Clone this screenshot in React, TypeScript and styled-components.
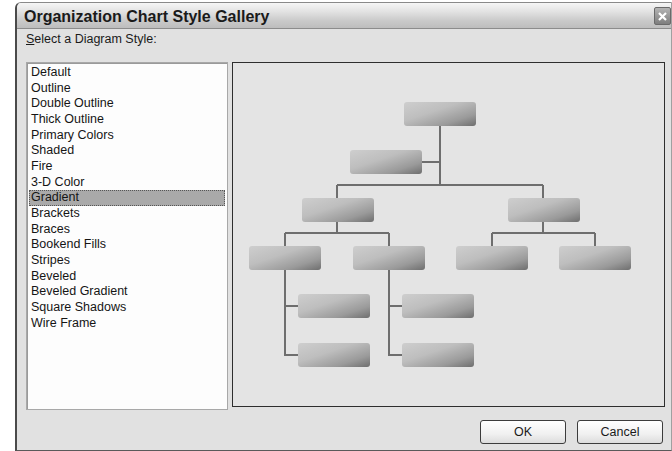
import * as React from 'react'
import styled, { createGlobalStyle } from 'styled-components'

const styles = [
  'Default',
  'Outline',
  'Double Outline',
  'Thick Outline',
  'Primary Colors',
  'Shaded',
  'Fire',
  '3-D Color',
  'Gradient',
  'Brackets',
  'Braces',
  'Bookend Fills',
  'Stripes',
  'Beveled',
  'Beveled Gradient',
  'Square Shadows',
  'Wire Frame',
]

// chart boxes, in preview coordinates
const boxes: [number, number][] = [
  [171, 39],
  [117, 87],
  [69, 135],
  [275, 135],
  [16, 183],
  [120, 183],
  [223, 183],
  [326, 183],
  [65, 231],
  [169, 231],
  [65, 280],
  [169, 280],
]

const lines = [
  'M207 63 V122',
  'M189 99 H207',
  'M104 122 H310',
  'M104 122 V135',
  'M310 122 V135',
  'M104 159 V170',
  'M52 170 H156',
  'M52 170 V183',
  'M156 170 V183',
  'M310 159 V170',
  'M259 170 H362',
  'M259 170 V183',
  'M362 170 V183',
  'M52 207 V292 H65',
  'M52 243 H65',
  'M156 207 V292 H169',
  'M156 243 H169',
]

const OrgChart: React.FC = () => (
  <svg width='431' height='343' viewBox='0 0 431 343'>
    <defs>
      <linearGradient id='boxFill' x1='0' y1='0' x2='1' y2='1'>
        <stop offset='0' stopColor='#cecece' />
        <stop offset='0.4' stopColor='#bebebe' />
        <stop offset='0.75' stopColor='#9a9a9a' />
        <stop offset='1' stopColor='#6e6e6e' />
      </linearGradient>
    </defs>
    <g stroke='#6e6e6e' strokeWidth='2' fill='none'>
      {lines.map((d) => (
        <path key={d} d={d} />
      ))}
    </g>
    {boxes.map(([x, y]) => (
      <rect key={`${x}-${y}`} x={x} y={y} width='72' height='24' rx='3' fill='url(#boxFill)' />
    ))}
  </svg>
)

const App: React.FC = () => {
  const [selected, setSelected] = React.useState('Gradient')

  return (
    <>
      <GlobalStyle />
      <Window>
        <TitleBar>
          <Title>Organization Chart Style Gallery</Title>
          <CloseButton aria-label='Close'>
            <svg width='9' height='9' viewBox='0 0 9 9'>
              <path d='M1 1 L8 8 M8 1 L1 8' stroke='#fff' strokeWidth='2.2' />
            </svg>
          </CloseButton>
        </TitleBar>
        <Body>
          <Label>
            <u>S</u>elect a Diagram Style:
          </Label>
          <Content>
            <StyleList>
              {styles.map((s) => (
                <StyleItem key={s} $active={s === selected} onClick={() => setSelected(s)}>
                  {s}
                </StyleItem>
              ))}
            </StyleList>
            <Preview>
              <OrgChart />
            </Preview>
          </Content>
          <Footer>
            <DialogButton>OK</DialogButton>
            <DialogButton>Cancel</DialogButton>
          </Footer>
        </Body>
      </Window>
    </>
  )
}

export default App

const GlobalStyle = createGlobalStyle`
  body {
    margin: 0;
    background: #fff;
    font-family: 'Liberation Sans', Arial, sans-serif;
  }
`

const Window = styled.div`
  margin: 2px 0 0 15px;
  width: 657px;
  height: 449px;
  box-sizing: border-box;
  border-left: 2px solid #4a4a4a;
  border-top: 1px solid #8a8a8a;
  border-bottom: 1px solid #5a5a5a;
  border-right: 1px solid #a0a0a0;
  border-top-left-radius: 6px;
  background: #e1e1e1;
  display: flex;
  flex-direction: column;
  overflow: hidden;
`

const TitleBar = styled.div`
  height: 25px;
  flex: none;
  display: flex;
  align-items: center;
  justify-content: space-between;
  padding: 0 0 0 7px;
  background: linear-gradient(#f6f6f6 0%, #e2e2e2 35%, #cacaca 70%, #bdbdbd 100%);
  border-bottom: 1px solid #8c8c8c;
`

const Title = styled.div`
  font-weight: bold;
  font-size: 16px;
  color: #1a1a1a;
  padding-top: 2px;
`

const CloseButton = styled.div`
  width: 15px;
  height: 16px;
  margin-top: 1px;
  border-radius: 2px;
  background: linear-gradient(#b4b4b4, #7e7e7e);
  border: 1px solid #6a6a6a;
  display: flex;
  align-items: center;
  justify-content: center;
`

const Body = styled.div`
  flex: 1;
  display: flex;
  flex-direction: column;
  padding: 0 0 0 9px;
`

const Label = styled.div`
  font-size: 12.5px;
  color: #1a1a1a;
  height: 21px;
  line-height: 21px;

  u {
    text-decoration-thickness: 1px;
  }
`

const Content = styled.div`
  display: flex;
  gap: 4px;
  align-items: flex-start;
  margin-top: 12px;
`

const StyleList = styled.div`
  width: 202px;
  height: 348px;
  box-sizing: border-box;
  background: #fdfdfd;
  border: 1px solid #a8a8a8;
  box-shadow: inset 1px 1px 0 #9a9a9a;
  padding: 2px 2px 0 2px;
`

const StyleItem = styled.div<{ $active?: boolean }>`
  height: 15.66px;
  line-height: 15.66px;
  font-size: 12.5px;
  color: #151515;
  padding-left: 2px;
  box-sizing: border-box;
  cursor: default;
  background: ${(p) => (p.$active ? '#a9a9a9' : 'transparent')};
  outline: ${(p) => (p.$active ? '1px dotted #555' : 'none')};
  outline-offset: -1px;
`

const Preview = styled.div`
  width: 433px;
  height: 345px;
  box-sizing: border-box;
  border: 1px solid #2e2e2e;
  background: #e4e4e4;
  display: flex;
`

const Footer = styled.div`
  display: flex;
  justify-content: flex-end;
  gap: 11px;
  padding: 10px 8px 0 0;
`

const DialogButton = styled.div`
  width: 86px;
  height: 24px;
  box-sizing: border-box;
  border: 1px solid #3c3c3c;
  border-radius: 3px;
  background: linear-gradient(#ffffff 0%, #f0f0f0 60%, #dcdcdc 100%);
  font-size: 12.5px;
  color: #1a1a1a;
  display: flex;
  align-items: center;
  justify-content: center;
`
